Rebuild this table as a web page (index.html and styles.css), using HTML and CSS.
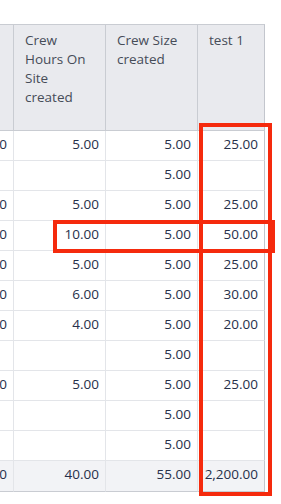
FILE: index.html
```html
<!DOCTYPE html>
<html lang="en">
<head>
<meta charset="utf-8">
<title>Crew grid</title>
<link rel="stylesheet" href="styles.css">
</head>
<body>
<div class="page">
  <div class="viewport">
    <div class="grid" role="table">
      <div class="hcell" role="columnheader"></div>
      <div class="hcell" role="columnheader">Crew Hours On Site created</div>
      <div class="hcell" role="columnheader">Crew Size created</div>
      <div class="hcell last" role="columnheader">test 1</div>

      <div class="cell">5.00</div><div class="cell">5.00</div><div class="cell">5.00</div><div class="cell last">25.00</div>
      <div class="cell"></div><div class="cell"></div><div class="cell">5.00</div><div class="cell last"></div>
      <div class="cell">5.00</div><div class="cell">5.00</div><div class="cell">5.00</div><div class="cell last">25.00</div>
      <div class="cell">10.00</div><div class="cell">10.00</div><div class="cell">5.00</div><div class="cell last">50.00</div>
      <div class="cell">5.00</div><div class="cell">5.00</div><div class="cell">5.00</div><div class="cell last">25.00</div>
      <div class="cell">6.00</div><div class="cell">6.00</div><div class="cell">5.00</div><div class="cell last">30.00</div>
      <div class="cell">4.00</div><div class="cell">4.00</div><div class="cell">5.00</div><div class="cell last">20.00</div>
      <div class="cell"></div><div class="cell"></div><div class="cell">5.00</div><div class="cell last"></div>
      <div class="cell">5.00</div><div class="cell">5.00</div><div class="cell">5.00</div><div class="cell last">25.00</div>
      <div class="cell"></div><div class="cell"></div><div class="cell">5.00</div><div class="cell last"></div>
      <div class="cell"></div><div class="cell"></div><div class="cell">5.00</div><div class="cell last"></div>

      <div class="fcell">40.00</div><div class="fcell">40.00</div><div class="fcell">55.00</div><div class="fcell last">2,200.00</div>
    </div>
  </div>
  <div class="mark mark-col"></div>
  <div class="mark mark-row"></div>
</div>
</body>
</html>
```
FILE: styles.css
```css
html, body {
  margin: 0;
  padding: 0;
  background: #ffffff;
}

.page {
  position: relative;
  width: 281px;
  height: 504px;
  overflow: hidden;
  font-family: "Open Sans", "Noto Sans", sans-serif;
  font-size: 13.5px;
  line-height: 19px;
}

.viewport {
  margin-top: 24px;
  width: 265px;
  overflow: hidden;
}

.grid {
  display: grid;
  grid-template-columns: 61px 92px 92px 67px;
  margin-left: -47px;
  width: 312px;
}

.hcell,
.cell,
.fcell {
  box-sizing: border-box;
  border-right: 1px solid #e3e5e9;
  border-bottom: 1px solid #e3e5e9;
}

.hcell {
  background: #e9eaee;
  color: #464c58;
  border-top: 1px solid #c9ccd2;
  border-right-color: #c9ccd2;
  border-bottom-color: #c9ccd2;
  padding: 6px 12px 23px 11px;
  text-align: left;
}

.cell {
  color: #26304a;
  text-align: right;
  padding: 4px 6px 6px 6px;
  height: 30px;
  white-space: nowrap;
}

.fcell {
  background: #f2f3f6;
  color: #26304a;
  text-align: right;
  padding: 4px 6px 6px 6px;
  height: 31px;
  white-space: nowrap;
  border-bottom-color: #c9ccd2;
}

.last {
  border-right-color: #c3c6cd;
}

.mark {
  position: absolute;
  box-sizing: border-box;
  border: 4px solid #f52a0d;
}

.mark-col {
  left: 199px;
  top: 123px;
  width: 73px;
  height: 373px;
}

.mark-row {
  left: 53px;
  top: 220px;
  width: 222px;
  height: 33px;
}
```
